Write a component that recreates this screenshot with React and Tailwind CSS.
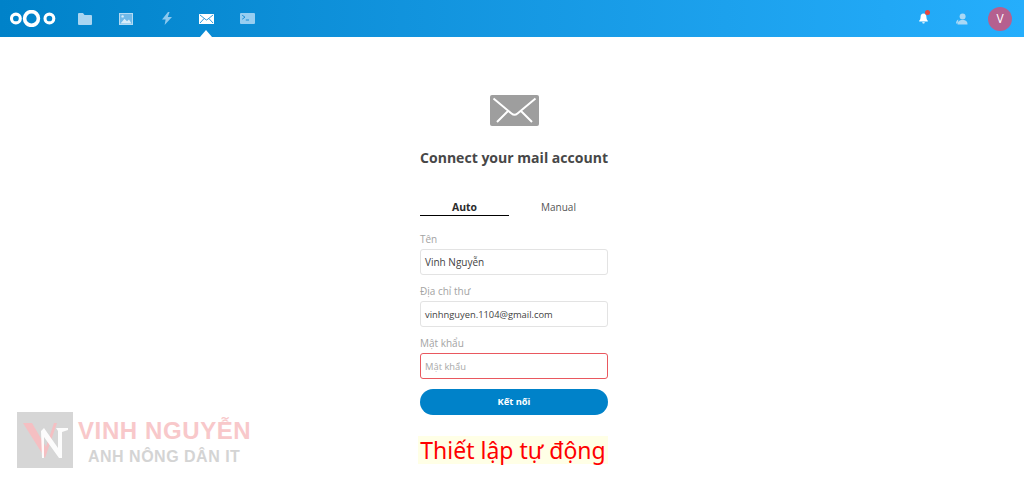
import React from "react";

const Logo = () => (
  <svg width="46" height="17" viewBox="0 0 46 17" fill="none" stroke="white">
    <circle cx="21.5" cy="8.5" r="6.9" strokeWidth="3.6" />
    <circle cx="5.9" cy="8.5" r="4.4" strokeWidth="3.1" />
    <circle cx="39.4" cy="8.5" r="4.4" strokeWidth="3.1" />
  </svg>
);

const Files = () => (
  <svg width="14" height="12" viewBox="0 0 14 12" fill="#a9d5f1">
    <path d="M0 1a1 1 0 0 1 1-1h4l1.5 2H13a1 1 0 0 1 1 1v8a1 1 0 0 1-1 1H1a1 1 0 0 1-1-1z" />
  </svg>
);

const Photos = () => (
  <svg width="14" height="12" viewBox="0 0 14 12" fill="none">
    <rect x="0.5" y="0.5" width="13" height="11" fill="#6fb9e9" stroke="#b3daf3" />
    <circle cx="3.6" cy="3.4" r="1.2" fill="#d8edfa" />
    <path d="M1.5 10.5 5.5 5.8 8 8.2 10 6.4 12.5 10.5z" fill="#d8edfa" />
  </svg>
);

const Activity = () => (
  <svg width="10" height="13" viewBox="0 0 10 13" fill="#8cc8ee">
    <path d="M6 0 0 7.5h3.6L2.6 13 10 5H5.8L7.6 0z" />
  </svg>
);

const Mail = () => (
  <svg width="15" height="10" viewBox="0 0 15 10">
    <rect width="15" height="10" rx="0.5" fill="white" />
    <path d="M1 1 7 5.8q.5.4 1 0L14 1M1 9l4.2-4.6M14 9 9.8 4.4" stroke="#1b8ed6" strokeWidth="0.9" fill="none" />
  </svg>
);

const Terminal = () => (
  <svg width="15" height="11" viewBox="0 0 15 11">
    <rect width="15" height="11" rx="1" fill="#97cef1" />
    <path d="M2.2 2.2 5 4.2 2.2 6.2" stroke="#1b8ed6" strokeWidth="1" fill="none" />
    <path d="M5.8 7h3.2" stroke="#1b8ed6" strokeWidth="1" />
  </svg>
);

const Bell = () => (
  <div className="relative h-[11px] w-[10px]">
    <svg width="9" height="11" viewBox="0 0 9 11" fill="white">
      <path d="M4.5 0.5C2.5 0.5 1.6 2 1.6 3.8c0 2-.5 3-1.4 4v.7h8.6v-.7c-.9-1-1.4-2-1.4-4C7.4 2 6.5.5 4.5.5z" />
      <path d="M3.2 9.2h2.6a1.3 1.3 0 0 1-2.6 0z" />
    </svg>
    <span className="absolute right-[-1px] top-[-3px] h-[5px] w-[5px] rounded-full bg-[#e8453c]" />
  </div>
);

const Contacts = () => (
  <svg width="12" height="12" viewBox="0 0 12 12" fill="#a9d8f5">
    <circle cx="6.6" cy="3.6" r="3" />
    <path d="M1.5 11.5c0-2.6 1.5-4.4 5.1-4.4s4.9 1.8 4.9 4.4z" />
    <path d="M2.4 6.6C1 7.2 0 8.4 0 10.4h1.6z" />
  </svg>
);

const Field = ({ label, value, placeholder, invalid, size }) => (
  <div className="flex flex-col">
    <label className="h-[18px] text-[10px] leading-[18px] text-[#a3a3a3]">{label}</label>
    <div
      className={`mt-[1px] h-[26px] rounded-[3px] border bg-white px-[4px] leading-[25px] ${size} ${
        invalid ? "border-[#e9585f] text-[#a8a8a8]" : "border-[#e3e3e3] text-[#3f3f3f]"
      }`}
    >
      {value || placeholder}
    </div>
  </div>
);

export default function App() {
  return (
    <div className="relative h-[485px] w-[1024px] overflow-hidden bg-white font-['Open_Sans',sans-serif]">
      <header className="flex h-[37px] items-center bg-gradient-to-r from-[#0082c9] to-[#25aefc] pl-[10px] pr-[12px]">
        <Logo />
        <nav className="ml-[22px] flex items-center">
          <div className="flex w-[41px] items-center"><Files /></div>
          <div className="flex w-[43px] items-center"><Photos /></div>
          <div className="flex w-[37px] items-center"><Activity /></div>
          <div className="relative flex w-[41px] items-center">
            <Mail />
            <span className="absolute left-[1px] top-[16px] h-0 w-0 border-x-[6.5px] border-b-[7px] border-x-transparent border-b-white" />
          </div>
          <Terminal />
        </nav>
        <div className="ml-auto flex items-center">
          <Bell />
          <div className="ml-[27px]"><Contacts /></div>
          <div className="ml-[20px] flex h-[24px] w-[24px] items-center justify-center rounded-full bg-[#b5608f] text-[12px] text-white">V</div>
        </div>
      </header>

      <main className="ml-[420px] flex w-[188px] flex-col">
        <div className="mt-[58px] flex justify-center">
          <svg width="49" height="31" viewBox="0 0 49 31">
            <rect width="49" height="31" rx="2" fill="#9e9e9e" />
            <path d="M3.5 3.5 21.5 18.5Q24.5 21 27.5 18.5L45.5 3.5M7 27 18.5 15.5M42 27 30.5 15.5" stroke="white" strokeWidth="2" fill="none" />
          </svg>
        </div>
        <h1 className="mt-[20px] whitespace-nowrap text-center text-[14.05px] font-bold leading-[24px] text-[#474747]">
          Connect your mail account
        </h1>
        <div className="mt-[23px] flex">
          <div className="h-[23px] w-[89px] border-b border-black pt-[6px] text-center text-[10.4px] font-bold leading-[16px] text-[#2b2b2b]">Auto</div>
          <div className="h-[23px] flex-1 pt-[6px] text-center text-[10px] leading-[16px] text-[#555555]">Manual</div>
        </div>
        <form className="mt-[14px] flex flex-col gap-[7px]">
          <Field label="Tên" value="Vinh Nguyễn" size="text-[10px]" />
          <Field label="Địa chỉ thư" value="vinhnguyen.1104@gmail.com" size="text-[9.35px]" />
          <Field label="Mật khẩu" placeholder="Mật khẩu" invalid size="text-[9.4px]" />
        </form>
        <button className="mt-[10px] h-[26px] rounded-full bg-[#0082c9] text-[9.3px] font-bold text-white">Kết nối</button>
        <div className="ml-[-2px] mt-[21px] h-[28px] whitespace-nowrap bg-[#ffffe6] text-center font-['Noto_Sans',sans-serif] text-[23px] leading-[28px] text-[#ff0000]">
          Thiết lập tự động
        </div>
      </main>

      <div className="absolute left-[17px] top-[412px] flex">
        <div className="h-[56px] w-[56px] bg-[#d6d6d6]">
          <svg width="56" height="56" viewBox="0 0 56 56" fill="none">
            <path d="M6 11h9l14 24 8-24h3L28 46z" fill="#f5bfc2" />
            <path d="M24 19l3-3 14 20V19l-2-3h12v2l-6 2v26h-3L27 25v21h-2z" fill="#ffffff" opacity="0.92" />
          </svg>
        </div>
        <div className="ml-[5px] flex flex-col font-['Liberation_Sans',sans-serif] font-bold">
          <div className="mt-[5px] text-[24px] leading-[28px] tracking-[0.6px] text-[#f8c8ca]">VINH NGUYỄN</div>
          <div className="ml-[10px] mt-[2px] text-[16px] leading-[20px] tracking-[0.5px] text-[#d4d4d4]">ANH NÔNG DÂN IT</div>
        </div>
      </div>
    </div>
  );
}
